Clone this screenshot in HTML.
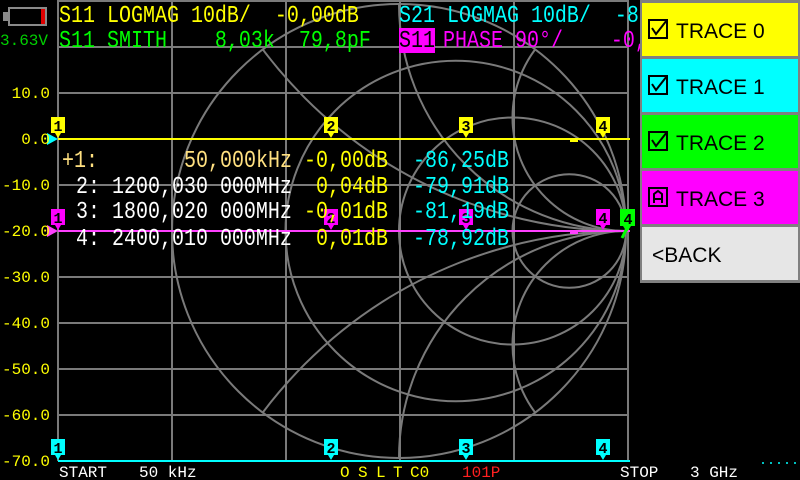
<!DOCTYPE html>
<html><head><meta charset="utf-8"><style>
html,body{margin:0;padding:0;background:#000;width:800px;height:480px;overflow:hidden}
svg{display:block;position:absolute;left:0;top:0}
.m{font-family:"Liberation Mono",monospace}
.s{font-family:"Liberation Sans",sans-serif}
</style></head><body>
<svg width="800" height="480" viewBox="0 0 800 480" xmlns="http://www.w3.org/2000/svg">
<defs>
<clipPath id="sc"><circle cx="399" cy="231" r="227"/></clipPath>
</defs>
<rect width="800" height="480" fill="#000"/>
<g stroke="#7a7a7a" stroke-width="2" fill="none">
<path d="M58 0V461M172 0V461M286 0V461M400 0V461M514 0V461M628 0V461"/>
<path d="M58 1H628M58 47H628M58 93H628M58 139H628M58 185H628M58 231H628M58 277H628M58 323H628M58 369H628M58 415H628"/>
</g>
<g stroke="#7a7a7a" stroke-width="2" fill="none">
<circle cx="399" cy="231" r="227"/>
<g clip-path="url(#sc)">
<circle cx="455.75" cy="231" r="170.25"/>
<circle cx="512.5" cy="231" r="113.5"/>
<circle cx="569.25" cy="231" r="56.75"/>
<circle cx="626" cy="-223" r="454"/>
<circle cx="626" cy="685" r="454"/>
<circle cx="626" cy="4" r="227"/>
<circle cx="626" cy="458" r="227"/>
<circle cx="626" cy="117.5" r="113.5"/>
<circle cx="626" cy="344.5" r="113.5"/>
</g>
</g>
<path d="M58 139H630" stroke="#ffff00" stroke-width="2"/>
<path d="M58 231H630" stroke="#ff40ff" stroke-width="2"/>
<path d="M58 461H630" stroke="#00ffff" stroke-width="2"/>
<path d="M570 141h8" stroke="#ffff00" stroke-width="2"/>
<path d="M570 233h8" stroke="#ff40ff" stroke-width="2"/>
<path d="M622 238l4 -8" stroke="#00ff00" stroke-width="3"/>
<path d="M47 133L58 139L47 145Z" fill="#00ffff"/>
<path d="M47 225L58 231L47 237Z" fill="#ff40ff"/>
<g class="m" font-size="15" font-weight="bold" text-anchor="middle" fill="#000">
<g fill="#ffff00"><path d="M51 117h14v16h-4l-3 5l-3-5h-4z"/><path d="M324 117h14v16h-4l-3 5l-3-5h-4z"/><path d="M459 117h14v16h-4l-3 5l-3-5h-4z"/><path d="M596 117h14v16h-4l-3 5l-3-5h-4z"/></g>
<text x="58" y="131">1</text><text x="331" y="131">2</text><text x="466" y="131">3</text><text x="603" y="131">4</text>
<g fill="#00ffff"><path d="M51 439h14v16h-4l-3 5l-3-5h-4z"/><path d="M324 439h14v16h-4l-3 5l-3-5h-4z"/><path d="M459 439h14v16h-4l-3 5l-3-5h-4z"/><path d="M596 439h14v16h-4l-3 5l-3-5h-4z"/></g>
<text x="58" y="453">1</text><text x="331" y="453">2</text><text x="466" y="453">3</text><text x="603" y="453">4</text>
<g fill="#ff00ff"><path d="M51 209h14v16h-4l-3 5l-3-5h-4z"/><path d="M324 209h14v16h-4l-3 5l-3-5h-4z"/><path d="M459 209h14v16h-4l-3 5l-3-5h-4z"/><path d="M596 209h14v16h-4l-3 5l-3-5h-4z"/></g>
<text x="58" y="223">1</text><text x="331" y="223">2</text><text x="466" y="223">3</text><text x="603" y="223">4</text>
<path d="M620 209h15v17h-4l-4 6l-4-6h-3z" fill="#00ff00"/><text x="628" y="224">4</text>
</g>
<g class="m" font-size="20">
<text transform="translate(59 22) scale(1 1.2)" fill="#ffff00" xml:space="preserve">S11 LOGMAG 10dB/  -0,00dB</text>
<text transform="translate(59 47) scale(1 1.2)" fill="#00ff00" xml:space="preserve">S11 SMITH    8,03k  79,8pF</text>
<text transform="translate(399 22) scale(1 1.2)" fill="#00ffff" xml:space="preserve">S21 LOGMAG 10dB/  -87,00dB</text>
<rect x="399" y="28" width="36" height="25" fill="#ff00ff"/>
<text transform="translate(399 47) scale(1 1.2)" fill="#000">S11</text>
<text transform="translate(443 47) scale(1 1.2)" fill="#ff00ff" xml:space="preserve">PHASE 90°/    -0,00°</text>
</g>
<g class="m" font-size="20" xml:space="preserve">
<text transform="translate(62 167) scale(1 1.2)" fill="#ffe080">+1:</text>
<text transform="translate(184 167) scale(1 1.2)" fill="#ffe080">50,000kHz</text>
<text transform="translate(304 167) scale(1 1.2)" fill="#ffff00">-0,00dB</text>
<text transform="translate(413 167) scale(1 1.2)" fill="#00ffff">-86,25dB</text>
<text transform="translate(76 193) scale(1 1.2)" fill="#fff">2: 1200,030 000MHz</text>
<text transform="translate(316 193) scale(1 1.2)" fill="#ffff00">0,04dB</text>
<text transform="translate(413 193) scale(1 1.2)" fill="#00ffff">-79,91dB</text>
<text transform="translate(76 218) scale(1 1.2)" fill="#fff">3: 1800,020 000MHz</text>
<text transform="translate(304 218) scale(1 1.2)" fill="#ffff00">-0,01dB</text>
<text transform="translate(413 218) scale(1 1.2)" fill="#00ffff">-81,19dB</text>
<text transform="translate(76 245) scale(1 1.2)" fill="#fff">4: 2400,010 000MHz</text>
<text transform="translate(316 245) scale(1 1.2)" fill="#ffff00">0,01dB</text>
<text transform="translate(413 245) scale(1 1.2)" fill="#00ffff">-78,92dB</text>
</g>
<g class="m" font-size="16" fill="#ffff00" text-anchor="end">
<text x="50" y="98">10.0</text><text x="50" y="144">0.0</text><text x="50" y="190">-10.0</text><text x="50" y="236">-20.0</text><text x="50" y="282">-30.0</text><text x="50" y="328">-40.0</text><text x="50" y="374">-50.0</text><text x="50" y="420">-60.0</text><text x="50" y="466">-70.0</text>
</g>
<rect x="9" y="8" width="37" height="17" fill="none" stroke="#8a8a8a" stroke-width="2"/>
<rect x="3" y="12" width="6" height="9" fill="#8a8a8a"/>
<rect x="41" y="9" width="4" height="15" fill="#e00000"/>
<text class="m" x="0" y="45" font-size="16" fill="#00d000">3.63V</text>
<g class="m" font-size="16">
<text x="59" y="477" fill="#fff">START</text>
<text x="139" y="477" fill="#fff">50 kHz</text>
<text x="340" y="477" fill="#ffff00">O</text>
<text x="358" y="477" fill="#ffff00">S</text>
<text x="376" y="477" fill="#ffff00">L</text>
<text x="393" y="477" fill="#ffff00">T</text>
<text x="410" y="477" fill="#ffff00">C0</text>
<text x="462" y="477" fill="#ff2020">101P</text>
<text x="620" y="477" fill="#fff">STOP</text>
<text x="690" y="477" fill="#fff">3 GHz</text>
</g>
<path d="M762 463h2M770 463h2M778 463h2M786 463h2M794 463h2" stroke="#00c0c0" stroke-width="2"/>
<rect x="640" y="0" width="160" height="283" fill="#808080"/>
<rect x="642" y="3" width="156" height="53" fill="#ffff00"/>
<rect x="642" y="59" width="156" height="53" fill="#00ffff"/>
<rect x="642" y="115" width="156" height="53" fill="#00ff00"/>
<rect x="642" y="171" width="156" height="53" fill="#ff00ff"/>
<rect x="642" y="227" width="156" height="53" fill="#e6e6e6"/>
<g fill="none" stroke="#000" stroke-width="2">
<rect x="649" y="20" width="18" height="18"/><path d="M652 28l4 6l11-14"/>
<rect x="649" y="76" width="18" height="18"/><path d="M652 84l4 6l11-14"/>
<rect x="649" y="132" width="18" height="18"/><path d="M652 140l4 6l11-14"/>
<rect x="649" y="188" width="18" height="18"/><path d="M654 203v-9l4-3l4 3v9M654 199h8"/>
</g>
<g class="s" font-size="21" fill="#000">
<text x="676" y="38">TRACE 0</text>
<text x="676" y="94">TRACE 1</text>
<text x="676" y="150">TRACE 2</text>
<text x="676" y="206">TRACE 3</text>
<text x="652" y="262">&lt;BACK</text>
</g>
</svg>
</body></html>
